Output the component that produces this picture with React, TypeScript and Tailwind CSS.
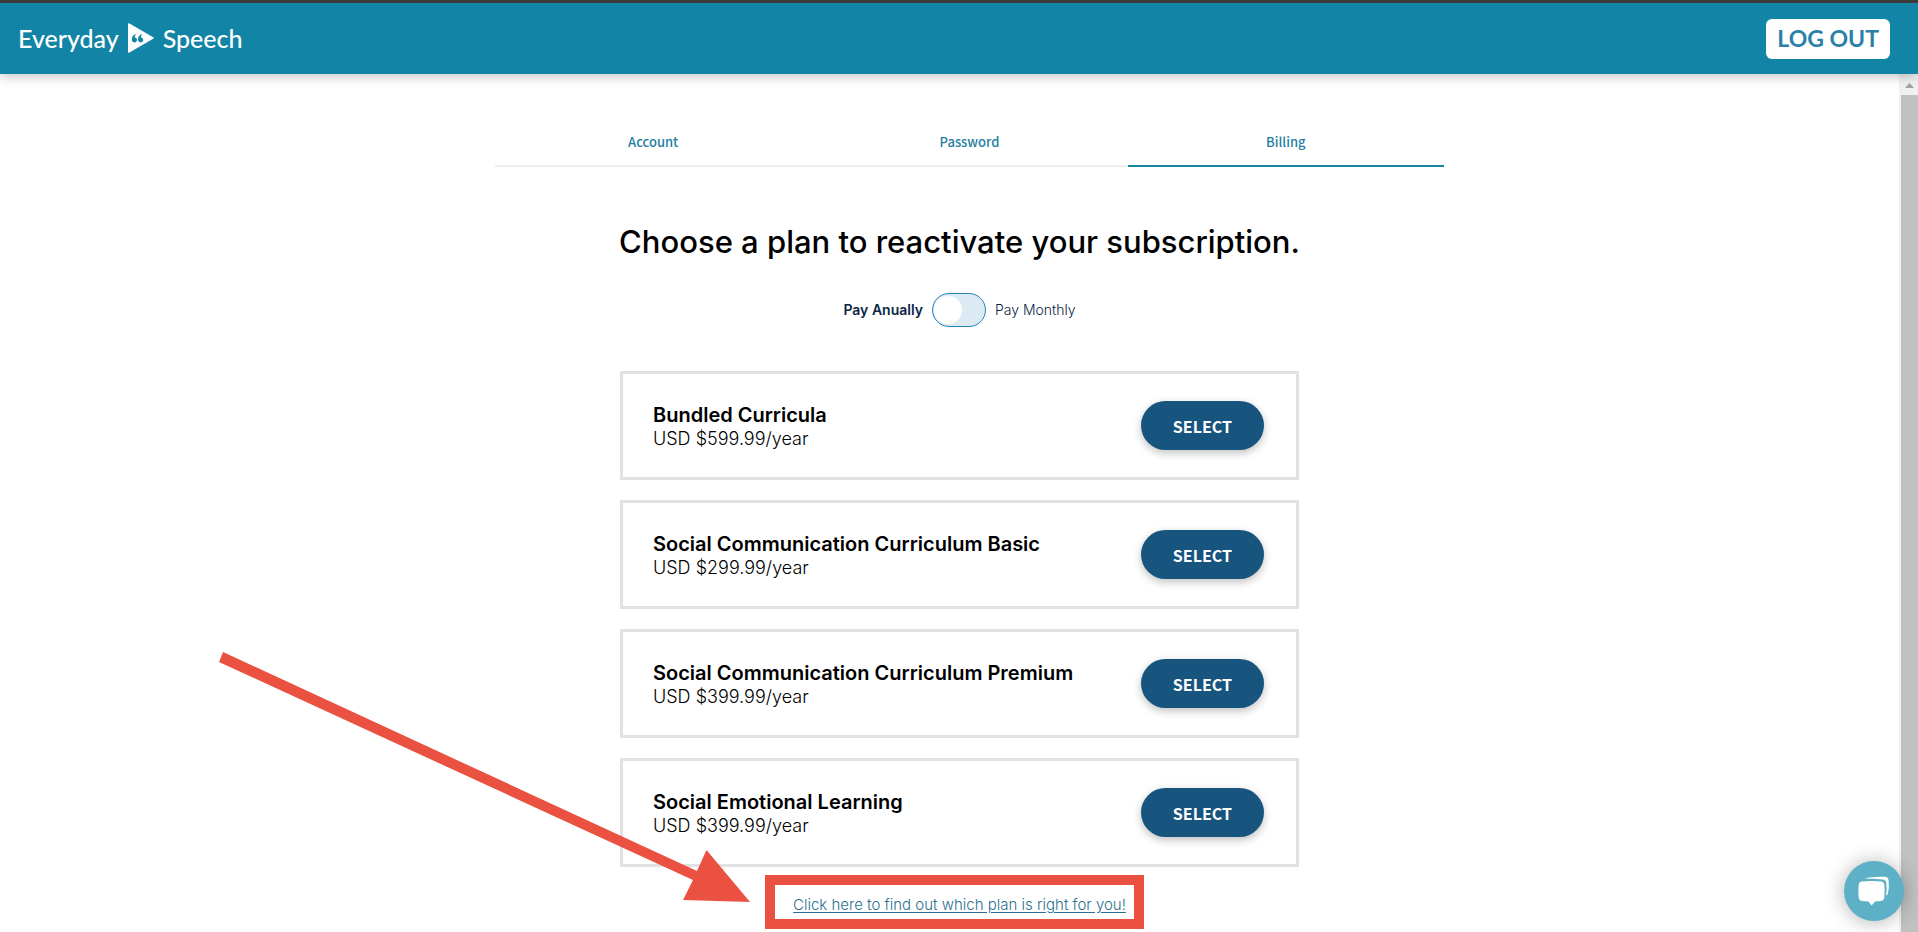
import React, { useState } from 'react';

const TABS = ['Account', 'Password', 'Billing'];

const PLANS = [
    { name: 'Bundled Curricula', yearly: '599.99', monthly: '59.99' },
    { name: 'Social Communication Curriculum Basic', yearly: '299.99', monthly: '29.99' },
    { name: 'Social Communication Curriculum Premium', yearly: '399.99', monthly: '39.99' },
    { name: 'Social Emotional Learning', yearly: '399.99', monthly: '39.99' },
];

function Logo() {
    return (
        <a href="#home" className="flex items-center gap-[9px] pb-0.5 font-['Lato',sans-serif] text-[25px] leading-8 font-medium text-white">
            <span>Everyday</span>
            <svg width="26" height="30" viewBox="0 0 26 30" aria-hidden="true">
                <path d="M0 1.2Q0 -.4 1.5 .5L25.2 14.2Q26.4 15 25.2 15.8L1.5 29.5Q0 30.4 0 28.8Z" fill="#fff" />
                <path d="M7.4 11.2C5 12 3.8 14 3.8 16.6C3.8 18.4 4.8 19.4 6.4 19.4C8 19.4 9 18.3 9 16.9C9 15.5 8 14.6 6.8 14.6C6.7 13.3 7.1 12.3 7.9 11.5Z" fill="#1284a6" />
                <path d="M13.6 11.2C11.2 12 10 14 10 16.6C10 18.4 11 19.4 12.6 19.4C14.2 19.4 15.2 18.3 15.2 16.9C15.2 15.5 14.2 14.6 13 14.6C12.9 13.3 13.3 12.3 14.1 11.5Z" fill="#1284a6" />
            </svg>
            <span>Speech</span>
        </a>
    );
}

function Header() {
    return (
        <header className="relative z-10 flex h-[74px] shrink-0 items-center justify-between border-t-3 border-[#3a3a3a] bg-[#1284a6] pr-7 pl-[18px] shadow-[0_2px_12px_rgba(0,0,0,0.25)]">
            <Logo />
            <button type="button" className="h-10 rounded-md bg-white px-[11px] font-['Lato',sans-serif] text-[23px] font-bold text-[#2a80a8]">
                LOG OUT
            </button>
        </header>
    );
}

function PlanCard({ name, price }: { name: string; price: string }) {
    return (
        <li className="flex items-center justify-between border-[3px] border-[#e2e2e2] py-[27px] pr-8 pl-[30px]">
            <div className="pt-0.5 text-black">
                <h2 className="text-[20px] leading-[23px] font-semibold">{name}</h2>
                <p className="text-[18px] leading-[23px] font-light">{price}</p>
            </div>
            <button
                type="button"
                className="h-[49px] rounded-full bg-[#17557f] px-8 font-['Noto_Sans_CJK_JP',sans-serif] text-[16px] font-bold text-white shadow-[0_3px_8px_rgba(0,0,0,0.25)]"
            >
                SELECT
            </button>
        </li>
    );
}

function Scrollbar() {
    return (
        <div className="flex w-[19px] shrink-0 flex-col bg-[#f1f1f1] pl-[2px]" aria-hidden="true">
            <svg width="17" height="21" viewBox="0 0 17 21">
                <path d="M4 14L8.5 9L13 14Z" fill="#a3a3a3" />
            </svg>
            <div className="flex-1 bg-[#c1c1c1]" />
        </div>
    );
}

export default function App() {
    const [tab, setTab] = useState('Billing');
    const [monthly, setMonthly] = useState(false);

    return (
        <div className="relative flex h-screen flex-col overflow-hidden bg-white font-['Inter',sans-serif]">
            <Header />
            <div className="flex min-h-0 flex-1">
                <main className="flex flex-1 flex-col items-center pl-5">
                    {/* Tabs */}
                    <nav className="flex w-full max-w-[969px] pt-12 pl-5">
                        {TABS.map((name) => (
                            <button
                                key={name}
                                type="button"
                                onClick={() => setTab(name)}
                                className={`flex-1 border-b-2 pt-2 pb-[11px] font-['Noto_Sans_CJK_JP',sans-serif] text-[13px] leading-6 font-medium text-[#1f7fa3] ${
                                    tab === name ? 'border-[#1284a6]' : 'border-[#ededed]'
                                }`}
                            >
                                {name}
                            </button>
                        ))}
                    </nav>

                    <h1 className="mt-[55px] text-[31px] leading-10 font-medium text-black">Choose a plan to reactivate your subscription.</h1>

                    {/* Billing period */}
                    <label className="mt-[31px] flex cursor-pointer items-center gap-[9px] text-[14px] leading-5 text-[#0b2545]">
                        <span className={monthly ? 'font-light' : 'font-semibold'}>Pay Anually</span>
                        <input
                            type="checkbox"
                            role="switch"
                            checked={monthly}
                            onChange={(e) => setMonthly(e.target.checked)}
                            className="peer sr-only"
                        />
                        <span className="flex h-[34px] w-[54px] items-center rounded-full border border-[#2b82b8] bg-[#dceaf4] px-px peer-checked:justify-end">
                            <span className="size-7 rounded-full bg-white" />
                        </span>
                        <span className={monthly ? 'font-semibold' : 'font-light'}>Pay Monthly</span>
                    </label>

                    {/* Plans */}
                    <ul className="mt-11 flex w-full max-w-[679px] flex-col gap-5">
                        {PLANS.map((plan) => (
                            <PlanCard
                                key={plan.name}
                                name={plan.name}
                                price={monthly ? `USD $${plan.monthly}/month` : `USD $${plan.yearly}/year`}
                            />
                        ))}
                    </ul>

                    <div className="relative mt-7">
                        <a href="#plans" className="block text-[15px] leading-5 font-light text-[#2b708e] underline underline-offset-2">
                            Click here to find out which plan is right for you!
                        </a>
                        {/* Callout frame and arrow */}
                        <div className="pointer-events-none absolute -top-5 -right-[18px] -bottom-3.5 -left-7 border-10 border-[#eb5140]">
                            <svg className="absolute right-full -bottom-2.5 mr-6" width="532" height="278" viewBox="0 0 532 278" aria-hidden="true">
                                <path d="M4 1L478 220L487.500 199L531 251L464 249L474 229L0 11Z" fill="#eb5140" />
                            </svg>
                        </div>
                    </div>
                </main>
                <Scrollbar />
            </div>

            {/* Chat launcher */}
            <button
                type="button"
                aria-label="Open chat"
                className="absolute right-[14px] bottom-[11px] z-20 flex size-[60px] items-center justify-center rounded-full bg-[#5eb0c6] shadow-[0_1px_20px_rgba(0,0,0,0.3)]"
            >
                <svg width="32" height="30" viewBox="0 0 32 30" aria-hidden="true">
                    <path d="M6.500 2.600Q14 .2 27 .8Q30.200 1 30.600 4.500Q31.300 12 29.900 17.500Q29.400 19.500 28.200 19.500Q29 12 28.200 6.500Q27.800 3.800 24.500 3.500Q16 2.700 6.500 2.600Z" fill="#fff" />
                    <path d="M4 5.500Q13.500 4.300 23 5.500Q26 5.900 26.300 9Q27 15.500 26.300 21.500Q26 24.500 23 25L17 25.400L13.600 29.600L10.500 25.400L4 25Q1 24.500 .700 21.500Q0 15.500 .700 9Q1 5.900 4 5.500Z" fill="#fff" />
                </svg>
            </button>
        </div>
    );
}
